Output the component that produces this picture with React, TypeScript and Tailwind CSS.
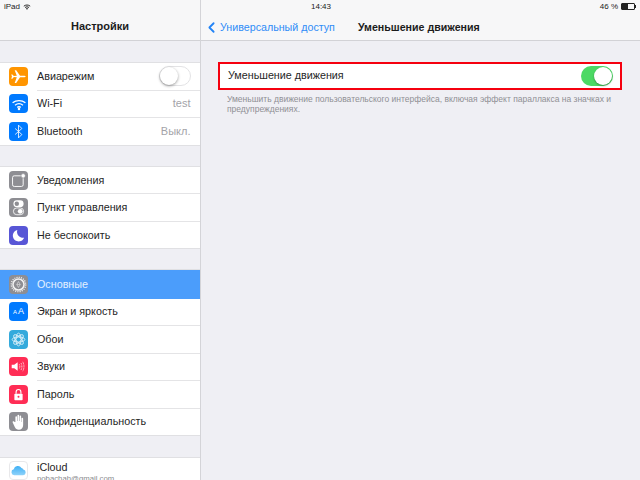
import type { ReactNode } from 'react';
import { ChevronLeft } from 'lucide-react';

const font = "font-['Helvetica_Neue','Liberation_Sans','Noto_Sans',sans-serif]";

interface RowProps {
  label: string;
  bg: string;
  icon: ReactNode;
  value?: string;
  selected?: boolean;
  right?: ReactNode;
}

function Row({ label, bg, icon, value, selected, right }: RowProps) {
  return (
    <div className={selected ? 'flex h-[28.5px] items-center bg-[#4b9dfb] pl-[9px] pr-[9.5px]' : 'flex h-[26.5px] items-center pl-[9px] pr-[9.5px]'}>
      <div className={`flex h-[19px] w-[19px] shrink-0 items-center justify-center rounded-[4px] ${bg}`}>{icon}</div>
      <div className={`ml-[9px] text-[10.75px] leading-none ${selected ? 'text-[#e4f0ff]' : 'text-[#262626]'}`}>{label}</div>
      <div className="ml-auto text-[11px] leading-none text-[#a3a3a8]">{value}</div>
      {right}
    </div>
  );
}

function Sep() {
  return <div className="ml-[37px] h-px bg-[#e4e4e6]" />;
}

function Group({ children }: { children: ReactNode }) {
  return <div className="border-y border-[#e0e0e3] bg-white">{children}</div>;
}

function Toggle({ on }: { on: boolean }) {
  return (
    <div className={on ? 'relative h-[20px] w-[32px] rounded-full bg-[#4cd964]' : 'relative h-[20px] w-[32px] rounded-full border border-[#e3e3e5] bg-white'}>
      <div className={on ? 'absolute right-[1px] top-[1px] h-[18px] w-[18px] rounded-full bg-white shadow-[0_1px_2px_rgba(0,0,0,0.35)]' : 'absolute left-0 top-0 h-[18px] w-[18px] rounded-full bg-white shadow-[0_1px_3px_rgba(0,0,0,0.4)]'} />
    </div>
  );
}

const Plane = (
  <svg viewBox="0 0 20 20" className="h-[17px] w-[17px]" fill="#fff">
    <path d="M1.500 7.500l1.300 0 1.700 1.800 3.500-.1L5.500 2.500h1.800l4.500 6.600 4.300-.1c1.300 0 2.400.4 2.400 1s-1.100 1-2.400 1l-4.300-.1-4.500 6.600H5.500l2.500-6.700-3.500-.1-1.700 1.800-1.300 0 .8-2.500z" />
  </svg>
);
const Wifi = (
  <svg viewBox="0 0 20 20" className="h-[16px] w-[16px]" fill="none" stroke="#fff" strokeWidth="1.600">
    <path d="M2 8.500c4.500-3.800 11.500-3.800 16 0M5 11.500c3-2.300 7-2.300 10 0M7.800 14.200c1.300-.9 3.100-.9 4.400 0" />
    <circle cx="10" cy="16.300" r=".8" fill="#fff" />
  </svg>
);
const Bt = (
  <svg viewBox="0 0 20 20" className="h-[15px] w-[15px]" fill="none" stroke="#fff" strokeWidth="1.100">
    <path d="M5.500 6l9 8-4.500 4.500V1.500L14.500 6l-9 8" />
  </svg>
);
const Notif = (
  <svg viewBox="0 0 20 20" className="h-[17px] w-[17px]" fill="none" stroke="#fff" strokeWidth="1.100">
    <rect x="3" y="4.500" width="12.500" height="12.500" rx="2" />
    <circle cx="15.500" cy="4.500" r="2.600" fill="#fff" stroke="#8e8e93" strokeWidth=".8" />
  </svg>
);
const Control = (
  <svg viewBox="0 0 20 20" className="h-[17px] w-[17px]">
    <rect x="4" y="1.500" width="12" height="8" rx="4" fill="#fff" />
    <circle cx="8" cy="5.500" r="2.600" fill="#8e8e93" />
    <rect x="4" y="10.500" width="12" height="8" rx="4" fill="none" stroke="#fff" strokeWidth="1" />
    <circle cx="12" cy="14.500" r="2.800" fill="#fff" />
  </svg>
);
const Moon = (
  <svg viewBox="0 0 20 20" className="h-[15px] w-[15px]" fill="#fff">
    <path d="M8.500 2.500A7.800 7.800 0 1 0 17.500 13 8 8 0 0 1 8.500 2.500z" />
  </svg>
);
const Gear = (
  <svg viewBox="0 0 20 20" className="h-[17px] w-[17px]" fill="none" stroke="#f2f2f2">
    <circle cx="10" cy="10" r="6.500" strokeWidth="1.800" />
    <circle cx="10" cy="10" r="8.500" strokeWidth="1.500" strokeDasharray="1.300 1.370" />
    <path d="M10 6.500l2 3.500h-4zM10 13.500l-2-3.500M12 10l-2 3.500" strokeWidth=".6" />
  </svg>
);
const Flower = (
  <svg viewBox="0 0 20 20" className="h-[17px] w-[17px]" fill="none" stroke="#fff" strokeWidth=".8">
    <ellipse cx="10" cy="10" rx="3" ry="7.500" />
    <ellipse cx="10" cy="10" rx="3" ry="7.500" transform="rotate(45 10 10)" />
    <ellipse cx="10" cy="10" rx="3" ry="7.500" transform="rotate(90 10 10)" />
    <ellipse cx="10" cy="10" rx="3" ry="7.500" transform="rotate(135 10 10)" />
  </svg>
);
const Sound = (
  <svg viewBox="0 0 20 20" className="h-[17px] w-[17px]" fill="#fff">
    <path d="M2 8h3l4-3v10l-4-3H2z" />
    <path d="M11 7.500c.8 1.500.8 3.500 0 5M13 6c1.300 2.500 1.300 5.500 0 8M15 4.500c1.900 3.300 1.900 7.700 0 11" fill="none" stroke="#fff" strokeWidth=".9" strokeDasharray="1.200 .6" />
  </svg>
);
const Lock = (
  <svg viewBox="0 0 20 20" className="h-[15px] w-[15px]" fill="#fff">
    <path d="M6.800 9V6.500a3.200 3.200 0 0 1 6.400 0V9" fill="none" stroke="#fff" strokeWidth="1.500" />
    <rect x="4.500" y="9" width="11" height="8.500" rx="1" />
    <circle cx="10" cy="13" r="1.300" fill="#ff2d55" />
  </svg>
);
const Hand = (
  <svg viewBox="0 0 20 20" className="h-[18px] w-[18px]" fill="#fff">
    <path d="M6 10V4.500a.9.900 0 0 1 1.800 0V9h.5V2.900a.9.900 0 0 1 1.800 0V9h.5V3.800a.9.900 0 0 1 1.800 0V10h.4V6.200a.9.900 0 0 1 1.800 0v7.300c0 3-2 5-4.800 5-2.300 0-3.500-1-4.500-3L3 10.500c-.5-1 .8-1.800 1.600-.9z" />
  </svg>
);
const Cloud = (
  <svg viewBox="0 0 20 20" className="h-[17px] w-[17px]">
    <defs>
      <linearGradient id="icloud" x1="0" y1="0" x2="0" y2="1">
        <stop offset="0" stopColor="#3fb0f5" />
        <stop offset="1" stopColor="#8ed2fa" />
      </linearGradient>
    </defs>
    <path d="M5 15.500a3.500 3.500 0 0 1-.6-6.900A5 5 0 0 1 13.500 7a3 3 0 0 1 2.200 1.800A3.400 3.400 0 0 1 15.500 15.500z" fill="url(#icloud)" />
  </svg>
);

export default function App() {
  return (
    <div className={`flex h-[480px] w-[640px] overflow-hidden bg-[#efeff4] ${font}`}>
      {/* sidebar */}
      <div className="h-full w-[201px] shrink-0 overflow-hidden border-r border-[#d4d4d8]">
        <div className="h-[41px] border-b border-[#d2d2d6] bg-[#f7f7f8]">
          <div className="flex h-[13px] items-center gap-[3px] pl-[4px] pt-[1px] text-[8px] leading-none text-[#222]">
            <span>iPad</span>
            <svg viewBox="0 0 20 20" className="h-[8px] w-[8px]" fill="none" stroke="#222" strokeWidth="2.400">
              <path d="M2 8c4.500-4 11.500-4 16 0M5 11.500c3-2.600 7-2.600 10 0" />
              <path d="M10 17l-3-3c2-1.300 4-1.300 6 0z" fill="#222" stroke="none" />
            </svg>
          </div>
          <div className="pt-[8px] text-center text-[11px] font-bold leading-none text-[#1c1c1c]">Настройки</div>
        </div>

        <div className="pt-[21px]">
          <Group>
            <Row label="Авиарежим" bg="bg-[#ff9500]" icon={Plane} right={<Toggle on={false} />} />
            <Sep />
            <Row label="Wi-Fi" bg="bg-[#007aff]" icon={Wifi} value="test" />
            <Sep />
            <Row label="Bluetooth" bg="bg-[#007aff]" icon={Bt} value="Выкл." />
          </Group>
        </div>

        <div className="pt-[20.25px]">
          <Group>
            <Row label="Уведомления" bg="bg-[#8e8e93]" icon={Notif} />
            <Sep />
            <Row label="Пункт управления" bg="bg-[#8e8e93]" icon={Control} />
            <Sep />
            <Row label="Не беспокоить" bg="bg-[#5856d6]" icon={Moon} />
          </Group>
        </div>

        <div className="pt-[19.75px]">
          <Group>
            <Row label="Основные" bg="bg-[#8e8e93]" icon={Gear} selected />
            <Row
              label="Экран и яркость"
              bg="bg-[#007aff]"
              icon={
                <span className="flex items-baseline gap-[1px] leading-none text-white">
                  <span className="text-[6px]">A</span>
                  <span className="text-[9px]">A</span>
                </span>
              }
            />
            <Sep />
            <Row label="Обои" bg="bg-[#34aadc]" icon={Flower} />
            <Sep />
            <Row label="Звуки" bg="bg-[#ff2d55]" icon={Sound} />
            <Sep />
            <Row label="Пароль" bg="bg-[#ff2d55]" icon={Lock} />
            <Sep />
            <Row label="Конфиденциальность" bg="bg-[#8e8e93]" icon={Hand} />
          </Group>
        </div>

        <div className="pt-[21px]">
          <Group>
            <div className="flex h-[30px] items-start pl-[9px] pt-[3px]">
              <div className="flex h-[19px] w-[19px] shrink-0 items-center justify-center rounded-[4px] border border-[#e8e8ea] bg-white">{Cloud}</div>
              <div className="ml-[9px]">
                <div className="text-[10.75px] leading-[12px] text-[#262626]">iCloud</div>
                <div className="pt-[1px] text-[7.75px] leading-[10px] text-[#8a8a8e]">pobachah@gmail.com</div>
              </div>
            </div>
          </Group>
        </div>
      </div>

      {/* detail */}
      <div className="min-w-0 flex-1">
        <div className="relative h-[41px] border-b border-[#d2d2d6] bg-[#f7f7f8]">
          <div className="absolute left-[110px] top-[2px] text-[8px] font-medium leading-[9px] text-[#222]">14:43</div>
          <div className="absolute right-[4px] top-[2px] flex items-center gap-[3px] text-[8px] leading-[9px] text-[#222]">
            <span>46 %</span>
            <div className="flex items-center">
              <div className="flex h-[7px] w-[14px] rounded-[1px] border border-[#222]">
                <div className="w-[6px] bg-[#222]" />
              </div>
              <div className="h-[3px] w-px bg-[#222]" />
            </div>
          </div>
          <div className="flex h-full items-center pl-[2px] pt-[14px]">
            <ChevronLeft className="h-[17px] w-[17px] text-[#2283f6]" strokeWidth={2.5} />
            <span className="text-[10.700px] leading-none text-[#2f8cf7]">Универсальный доступ</span>
            <span className="ml-[23px] text-[10.650px] font-bold leading-none text-[#1c1c1c]">Уменьшение движения</span>
          </div>
        </div>

        <div className="pl-[17px] pr-[18px] pt-[21px]">
          <div className="flex h-[27.5px] items-center justify-between border-2 border-[#f5000f] bg-white pl-[8px] pr-[7px]">
            <span className="text-[10.750px] leading-none text-[#262626]">Уменьшение движения</span>
            <Toggle on />
          </div>
          <p className="pl-[9px] pt-[4.500px] text-[8.500px] leading-[10px] text-[#8f8f94]">
            Уменьшить движение пользовательского интерфейса, включая эффект параллакса на значках и предупреждениях.
          </p>
        </div>
      </div>
    </div>
  );
}
